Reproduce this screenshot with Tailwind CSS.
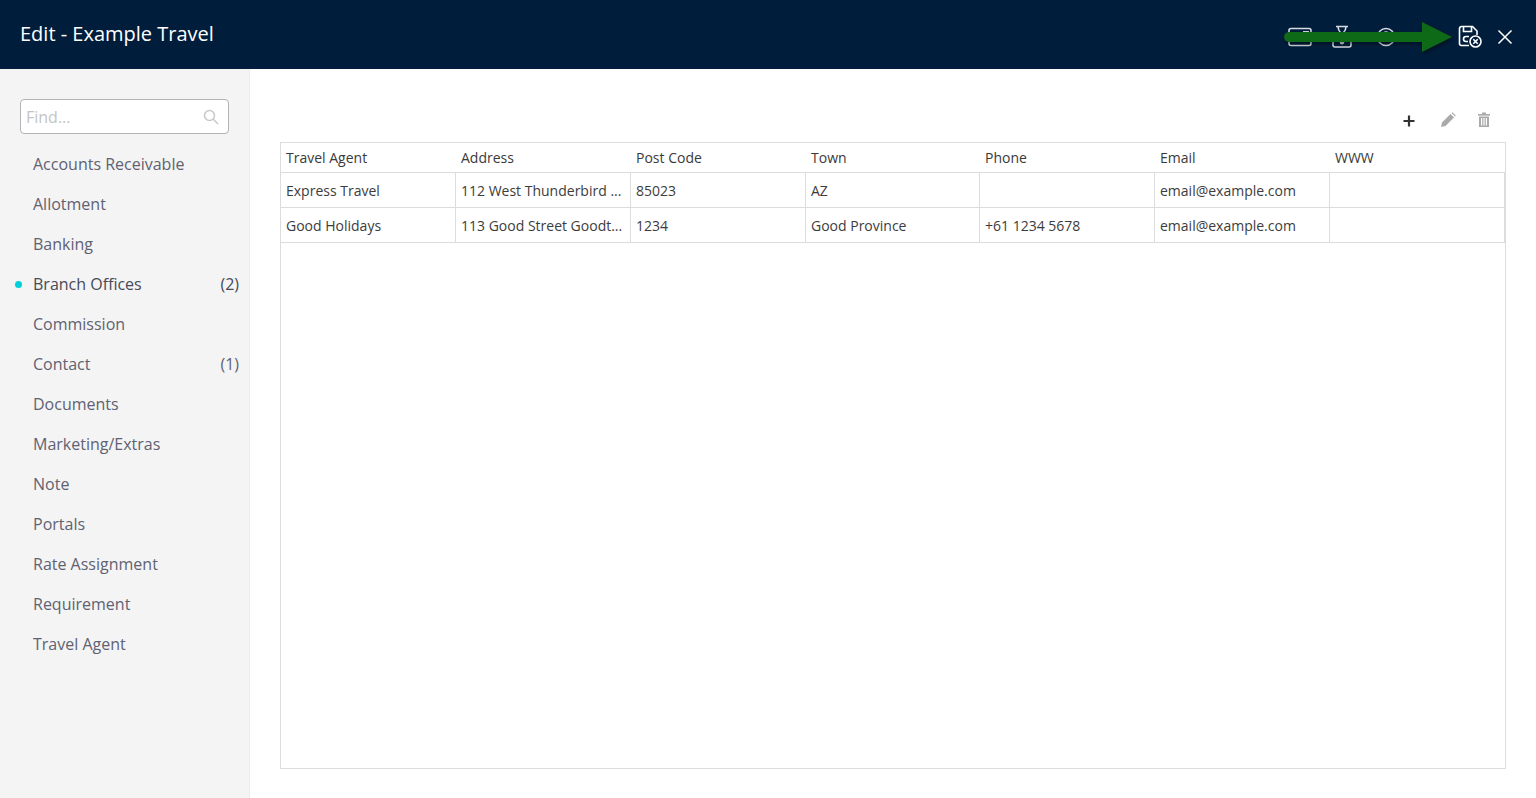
<!DOCTYPE html>
<html lang="en">
<head>
    <meta charset="UTF-8">
    <meta name="viewport" content="width=device-width, initial-scale=1.0">
    <script src="https://cdn.jsdelivr.net/npm/@tailwindcss/browser@4"></script>
    <title>Edit - Example Travel</title>
</head>
<body class="h-screen overflow-hidden bg-white font-['Open_Sans',sans-serif]">

    <!-- Header -->
    <header class="relative h-[69px] bg-[#001e3c] flex items-center justify-between pl-5 pr-[23px]">
        <h1 class="text-[20px] font-medium text-white leading-none -mt-[2px]">Edit - Example Travel</h1>
        <div class="flex items-center mt-[4px]">
            <!-- card -->
            <svg class="w-6 h-6 mr-[18px]" viewBox="0 0 24 24" fill="none" stroke="#d8dce2" stroke-width="1.6"><rect x="1" y="3.5" width="22" height="17" rx="2"/><rect x="15" y="6" width="6" height="3" fill="#d8dce2" stroke="none"/></svg>
            <!-- timer -->
            <svg class="w-6 h-6 mr-[20px]" viewBox="0 0 24 24" fill="none" stroke="#d8dce2" stroke-width="1.6"><path d="M6 1.5h12M8 1.5c0 5 3 6 4 8 1-2 4-3 4-8"/><rect x="3" y="12" width="18" height="10" rx="2"/><circle cx="12" cy="17" r="1.6" fill="#d8dce2"/></svg>
            <!-- help -->
            <svg class="w-6 h-6 mr-[20px]" viewBox="0 0 24 24" fill="none" stroke="#d8dce2" stroke-width="1.6"><circle cx="12" cy="12" r="8.5"/><path d="M9.500 9.500a2.500 2.500 0 0 1 5 0"/></svg>
            <!-- hidden behind arrow -->
            <svg class="w-6 h-6 mr-[16px]" viewBox="0 0 24 24" fill="none" stroke="#d8dce2" stroke-width="1.6"><path d="M10 4a8.5 8.5 0 0 0 0 16"/></svg>
            <!-- save and close -->
            <svg class="w-6 h-6 mr-[15px]" viewBox="0 0 24 24" fill="none" stroke="#ffffff" stroke-width="1.6"><path d="M11 20.5H3.5a2 2 0 0 1-2-2v-15a2 2 0 0 1 2-2h11l4.5 4.5v4"/><path d="M5.500 1.500v5h8v-5"/><path d="M11 11.500H8a2.200 2.200 0 0 0 0 5h2"/><circle cx="17.500" cy="16.500" r="5.500" fill="#001e3c"/><path d="M15.300 14.300l4.400 4.400M19.700 14.300l-4.400 4.400"/></svg>
            <!-- close -->
            <svg class="w-[16px] h-[16px]" viewBox="0 0 16 16" fill="none" stroke="#ffffff" stroke-width="1.5"><path d="M1.500 1.500l13 13M14.500 1.500l-13 13"/></svg>
        </div>

        <!-- Green annotation arrow -->
        <svg class="absolute left-[1280px] top-[20px] w-[176px] h-[34px] drop-shadow-[1px_2px_2px_rgba(0,0,0,0.45)]" viewBox="0 0 176 34">
            <path d="M9 17H145" stroke="#0e6a16" stroke-width="10" stroke-linecap="round"/>
            <polygon points="142,2 172,17 142,32" fill="#0e6a16"/>
        </svg>
    </header>

    <div class="flex h-[729px]">
        <!-- Sidebar -->
        <aside class="w-[250px] shrink-0 bg-[#f4f4f4] border-r border-[#ececec] pt-[30px] pl-5 pr-[10px]">
            <div class="w-[209px] h-[35px] bg-white border border-[#b4b4b8] rounded-[4px] flex items-center justify-between pl-[5px] pr-[9px]">
                <span class="text-[16px] text-[#c4c4c4]">Find...</span>
                <svg class="w-[16px] h-[16px]" viewBox="0 0 16 16" fill="none" stroke="#c8c8c8" stroke-width="1.5"><circle cx="6.500" cy="6.500" r="5"/><path d="M10.300 10.300l4.700 4.700"/></svg>
            </div>
            <nav class="mt-[10px] text-[16px] text-[#5f6272]">
                <div class="h-10 flex items-center pl-[13px]">Accounts Receivable</div>
                <div class="h-10 flex items-center pl-[13px]">Allotment</div>
                <div class="h-10 flex items-center pl-[13px]">Banking</div>
                <div class="relative h-10 flex items-center justify-between pl-[13px] font-medium text-[#474a57]">
                    <span class="absolute -left-[5px] top-[17px] w-[7px] h-[7px] rounded-full bg-[#00cfdc]"></span>
                    <span>Branch Offices</span><span>(2)</span>
                </div>
                <div class="h-10 flex items-center pl-[13px]">Commission</div>
                <div class="h-10 flex items-center justify-between pl-[13px]"><span>Contact</span><span>(1)</span></div>
                <div class="h-10 flex items-center pl-[13px]">Documents</div>
                <div class="h-10 flex items-center pl-[13px]">Marketing/Extras</div>
                <div class="h-10 flex items-center pl-[13px]">Note</div>
                <div class="h-10 flex items-center pl-[13px]">Portals</div>
                <div class="h-10 flex items-center pl-[13px]">Rate Assignment</div>
                <div class="h-10 flex items-center pl-[13px]">Requirement</div>
                <div class="h-10 flex items-center pl-[13px]">Travel Agent</div>
            </nav>
        </aside>

        <!-- Main -->
        <main class="flex-1 pl-[30px] pr-[30px] flex flex-col">
            <!-- Toolbar -->
            <div class="h-[73px] flex items-end justify-end pb-[14px] pr-[15px]">
                <svg class="w-[14px] h-[14px] mr-[24px]" viewBox="0 0 14 14" fill="none" stroke="#333333" stroke-width="2.2"><path d="M7 1.500v11M1.500 7h11"/></svg>
                <svg class="w-[16px] h-[16px] mr-[21px]" viewBox="0 0 16 16" fill="#aaaaaa"><path d="M1 15l1-4.500L10.500 2l3.500 3.500L5.500 14z"/><path d="M11.500 1l1-.7 3.200 3.200-.7 1z"/></svg>
                <svg class="w-[14px] h-[16px]" viewBox="0 0 14 16" fill="#aaaaaa"><rect x="1" y="2" width="12" height="1.600"/><rect x="5" y="0.500" width="4" height="1.600"/><path fill-rule="evenodd" d="M2 4.500h10V15H2zM4 6v7.500h1.200V6zM6.400 6v7.500h1.200V6zM8.800 6v7.500H10V6z"/></svg>
            </div>

            <!-- Table -->
            <div class="w-[1226px] h-[627px] border border-[#dcdcdc] text-[14px] text-[#3c3c3c]">
                <div class="grid grid-cols-[175px_175px_175px_174px_175px_175px_175px] h-[30px] border-b border-[#dcdcdc] items-center font-medium text-[#3a3a3a]">
                    <div class="pl-[5px]">Travel Agent</div>
                    <div class="pl-[5px]">Address</div>
                    <div class="pl-[5px]">Post Code</div>
                    <div class="pl-[5px]">Town</div>
                    <div class="pl-[5px]">Phone</div>
                    <div class="pl-[5px]">Email</div>
                    <div class="pl-[5px]">WWW</div>
                </div>
                <div class="grid grid-cols-[175px_175px_175px_174px_175px_175px_175px] h-[35px] border-b border-[#dcdcdc]">
                    <div class="pl-[5px] flex items-center border-r border-[#dcdcdc]">Express Travel</div>
                    <div class="pl-[5px] flex items-center border-r border-[#dcdcdc]">112 West Thunderbird ...</div>
                    <div class="pl-[5px] flex items-center border-r border-[#dcdcdc]">85023</div>
                    <div class="pl-[5px] flex items-center border-r border-[#dcdcdc]">AZ</div>
                    <div class="pl-[5px] flex items-center border-r border-[#dcdcdc]"></div>
                    <div class="pl-[5px] flex items-center border-r border-[#dcdcdc]">email@example.com</div>
                    <div class="pl-[5px] flex items-center border-r border-[#dcdcdc]"></div>
                </div>
                <div class="grid grid-cols-[175px_175px_175px_174px_175px_175px_175px] h-[35px] border-b border-[#dcdcdc]">
                    <div class="pl-[5px] flex items-center border-r border-[#dcdcdc]">Good Holidays</div>
                    <div class="pl-[5px] flex items-center border-r border-[#dcdcdc]">113 Good Street Goodt...</div>
                    <div class="pl-[5px] flex items-center border-r border-[#dcdcdc]">1234</div>
                    <div class="pl-[5px] flex items-center border-r border-[#dcdcdc]">Good Province</div>
                    <div class="pl-[5px] flex items-center border-r border-[#dcdcdc]">+61 1234 5678</div>
                    <div class="pl-[5px] flex items-center border-r border-[#dcdcdc]">email@example.com</div>
                    <div class="pl-[5px] flex items-center border-r border-[#dcdcdc]"></div>
                </div>
            </div>
        </main>
    </div>
</body>
</html>
